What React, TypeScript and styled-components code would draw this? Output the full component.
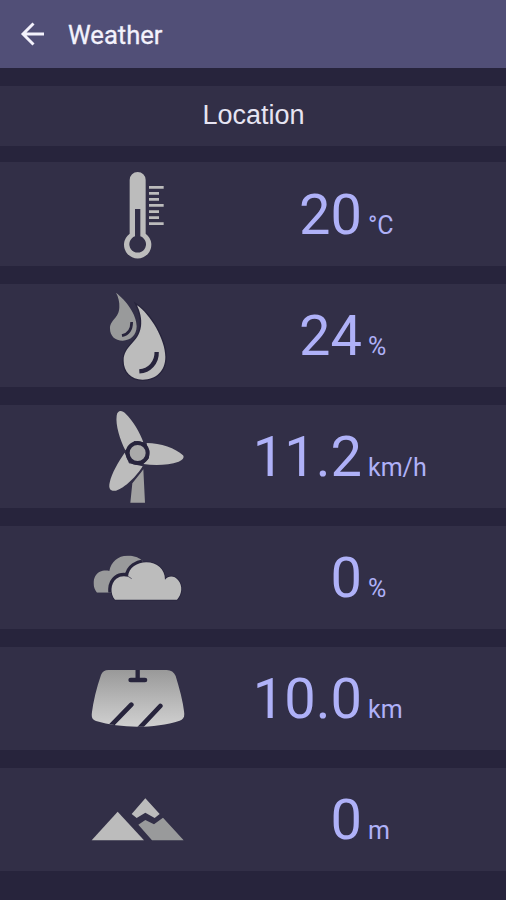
import React from "react";
import styled, { createGlobalStyle } from "styled-components";

const GlobalStyle = createGlobalStyle`
  html, body { margin: 0; background: #27243c; }
`;

const Screen = styled.main`
  width: 100%;
  height: 900px;
  display: flex;
  flex-direction: column;
  overflow: hidden;
  background: #27243c;
  font-family: Roboto, sans-serif;
`;

const AppBar = styled.header`
  height: 68px;
  flex: none;
  display: flex;
  align-items: center;
  gap: 22px;
  padding-left: 20px;
  box-sizing: border-box;
  background: #514f77;
  color: #f3f2fc;
`;

const BackButton = styled.button`
  display: flex;
  padding: 0;
  border: 0;
  background: none;
  color: inherit;
`;

const Title = styled.h1`
  margin: 1px 0 0 1px;
  font-size: 25.6px;
  line-height: 30px;
  font-weight: 400;
  -webkit-text-stroke: 0.3px currentColor;
`;

const LocationBar = styled.section`
  height: 60px;
  flex: none;
  margin: 18px 0 16px;
  padding: 0 0 3px 1px;
  box-sizing: border-box;
  display: flex;
  align-items: center;
  justify-content: center;
  background: #322f47;
  color: #e6e4f2;
  font: 27px/32px "Liberation Sans", sans-serif;
`;

const Readings = styled.div`
  display: flex;
  flex-direction: column;
  gap: 18px;
`;

const Row = styled.section`
  height: 103px;
  flex: none;
  display: grid;
  grid-template-columns: 120px 162px auto;
  align-items: baseline;
  padding-left: 80px;
  background: #322f47;
  color: #afb1f8;

  &:first-child { padding-top: 1px; }
`;

const Icon = styled.svg`
  width: 120px;
  height: 103px;
  align-self: start;
  display: block;
`;

const Value = styled.span`
  font-size: 56px;
  line-height: 105px;
  text-align: right;
`;

const Unit = styled.span`
  padding-left: 6px;
  font-size: 25px;
`;

const light = "#bcbcbc";
const dim = "#999a9b";
const dark = "#27243c";

const Thermometer = () => (
  <Icon viewBox="0 9 360 309">
    <path
      fillRule="evenodd"
      fill={light}
      d="M149 60a24 24 0 0 1 48 0V221A41 41 0 1 1 149 221ZM165 147V229A25 25 0 1 0 181 229V147Z"
    />
    <path
      fill="none"
      stroke={light}
      strokeWidth="8"
      d="M207 82h44M207 100h30M207 118h30M207 136h44M207 155h30M207 173h30M207 191h44"
    />
  </Icon>
);

const Drops = () => (
  <Icon viewBox="0 12 360 309">
    <path fill={dim} d="M108 38C138 61 170 103 170 139C170 166 151 182 128 182C105 182 90 167 90 146C90 119 117 116 118 82C119 66 115 51 108 38Z" />
    <path fill="none" stroke={dark} strokeWidth="8" d="M155 126C155 148 144 163 126 167" />
    <path
      fill={light}
      stroke={dark}
      strokeWidth="8"
      paintOrder="stroke"
      d="M171 76C211 103 256 178 256 231C256 273 228 299 188 299C153 299 131 274 131 242C131 196 176 190 183 139C186 116 180 95 171 76Z"
    />
    <path fill="none" stroke={dark} strokeWidth="13" d="M230 216C231 248 208 272 178 274" />
  </Icon>
);

const Turbine = () => (
  <Icon viewBox="0 15 360 309">
    <path fill="#a1a1a1" d="M184 216L190 208L195 308H151L157 250Z" />
    <g fill={light}>
      <path d="M136 151C120 119 106 75 110 47C112 31 125 29 137 41C158 61 181 99 190 127L163 123Z" />
      <path d="M200 129C242 129 287 145 309 166C314 173 308 180 296 185C265 196 224 197 190 192L207 174Z" />
      <path d="M134 158L147 190L188 199C172 226 133 266 108 272C91 275 85 265 89 248C95 219 116 184 134 158Z" />
    </g>
    <circle cx="173" cy="159" r="30" fill="#aaa" stroke={dark} strokeWidth="12" />
  </Icon>
);

const Clouds = () => (
  <Icon viewBox="0 -42 360 309">
    <defs>
      <clipPath id="back-cloud">
        <path d="M51 158C40 145 37 124 46 108C55 93 73 89 88 93C93 65 114 47 142 47C163 46 179 53 189 64L152 94L106 158Z" />
      </clipPath>
      <path
        id="front-cloud"
        d="M105 179C90 162 91 130 109 116C119 108 132 107 144 110C146 83 172 67 199 67C231 67 255 88 255 119C266 106 283 107 294 120C309 137 306 163 291 179Z"
      />
    </defs>
    <g clipPath="url(#back-cloud)">
      <rect x="30" y="40" width="180" height="130" fill={dim} />
      <use href="#front-cloud" stroke={dark} strokeWidth="20" />
    </g>
    <use href="#front-cloud" fill={light} stroke={dark} strokeWidth="5" paintOrder="stroke" />
    <path fill="none" stroke={dark} strokeWidth="2" d="M144 109L155 116" />
  </Icon>
);

const Windshield = () => (
  <Icon viewBox="0 -24 360 309">
    <defs>
      <linearGradient id="glass" x1="0" y1="0" x2="0" y2="1">
        <stop offset="0" stopColor="#999" />
        <stop offset=".65" stopColor="#bebebe" />
        <stop offset="1" stopColor="#d0d0d0" />
      </linearGradient>
      <clipPath id="glass-edge">
        <path d="M86 45H260C273 45 282 51 287 63C298 99 309 138 313 175C314 187 309 194 299 197C223 221 124 221 48 198C38 195 34 188 35 177C40 138 50 98 63 60C67 50 74 45 86 45Z" />
      </clipPath>
    </defs>
    <g clipPath="url(#glass-edge)">
      <rect x="30" y="45" width="290" height="172" fill="url(#glass)" />
      <path fill="none" stroke={dark} strokeWidth="14" strokeLinecap="round" d="M154 149L84 221M241 153L174 224M152 75H195" />
      <path stroke={dark} strokeWidth="13" d="M173 42V75" />
    </g>
  </Icon>
);

const Mountains = () => (
  <Icon viewBox="0 -51 360 309">
    <path fill={light} d="M35 166L113 80L192 166Z" />
    <path fill={light} d="M196 40L239 87L224 99L196 83L170 99L155 87Z" />
    <path fill={dim} d="M175 119L196 105L222 118L249 98L311 166H216Z" />
  </Icon>
);

const readings = [
  { name: "temperature", icon: <Thermometer />, value: "20", unit: "°C" },
  { name: "humidity", icon: <Drops />, value: "24", unit: "%" },
  { name: "wind", icon: <Turbine />, value: "11.2", unit: "km/h" },
  { name: "clouds", icon: <Clouds />, value: "0", unit: "%" },
  { name: "visibility", icon: <Windshield />, value: "10.0", unit: "km" },
  { name: "altitude", icon: <Mountains />, value: "0", unit: "m" },
];

export default function App() {
  return (
    <Screen>
      <GlobalStyle />
      <AppBar>
        <BackButton aria-label="Back">
          <svg width="25" height="24" viewBox="0 0 25 24" fill="none" stroke="currentColor" strokeWidth="2.9">
            <path d="M24 12H3M13.5 1.5L3 12L13.5 22.5" />
          </svg>
        </BackButton>
        <Title>Weather</Title>
      </AppBar>
      <LocationBar>Location</LocationBar>
      <Readings>
        {readings.map((r) => (
          <Row key={r.name}>
            {r.icon}
            <Value>{r.value}</Value>
            <Unit>{r.unit}</Unit>
          </Row>
        ))}
      </Readings>
    </Screen>
  );
}
